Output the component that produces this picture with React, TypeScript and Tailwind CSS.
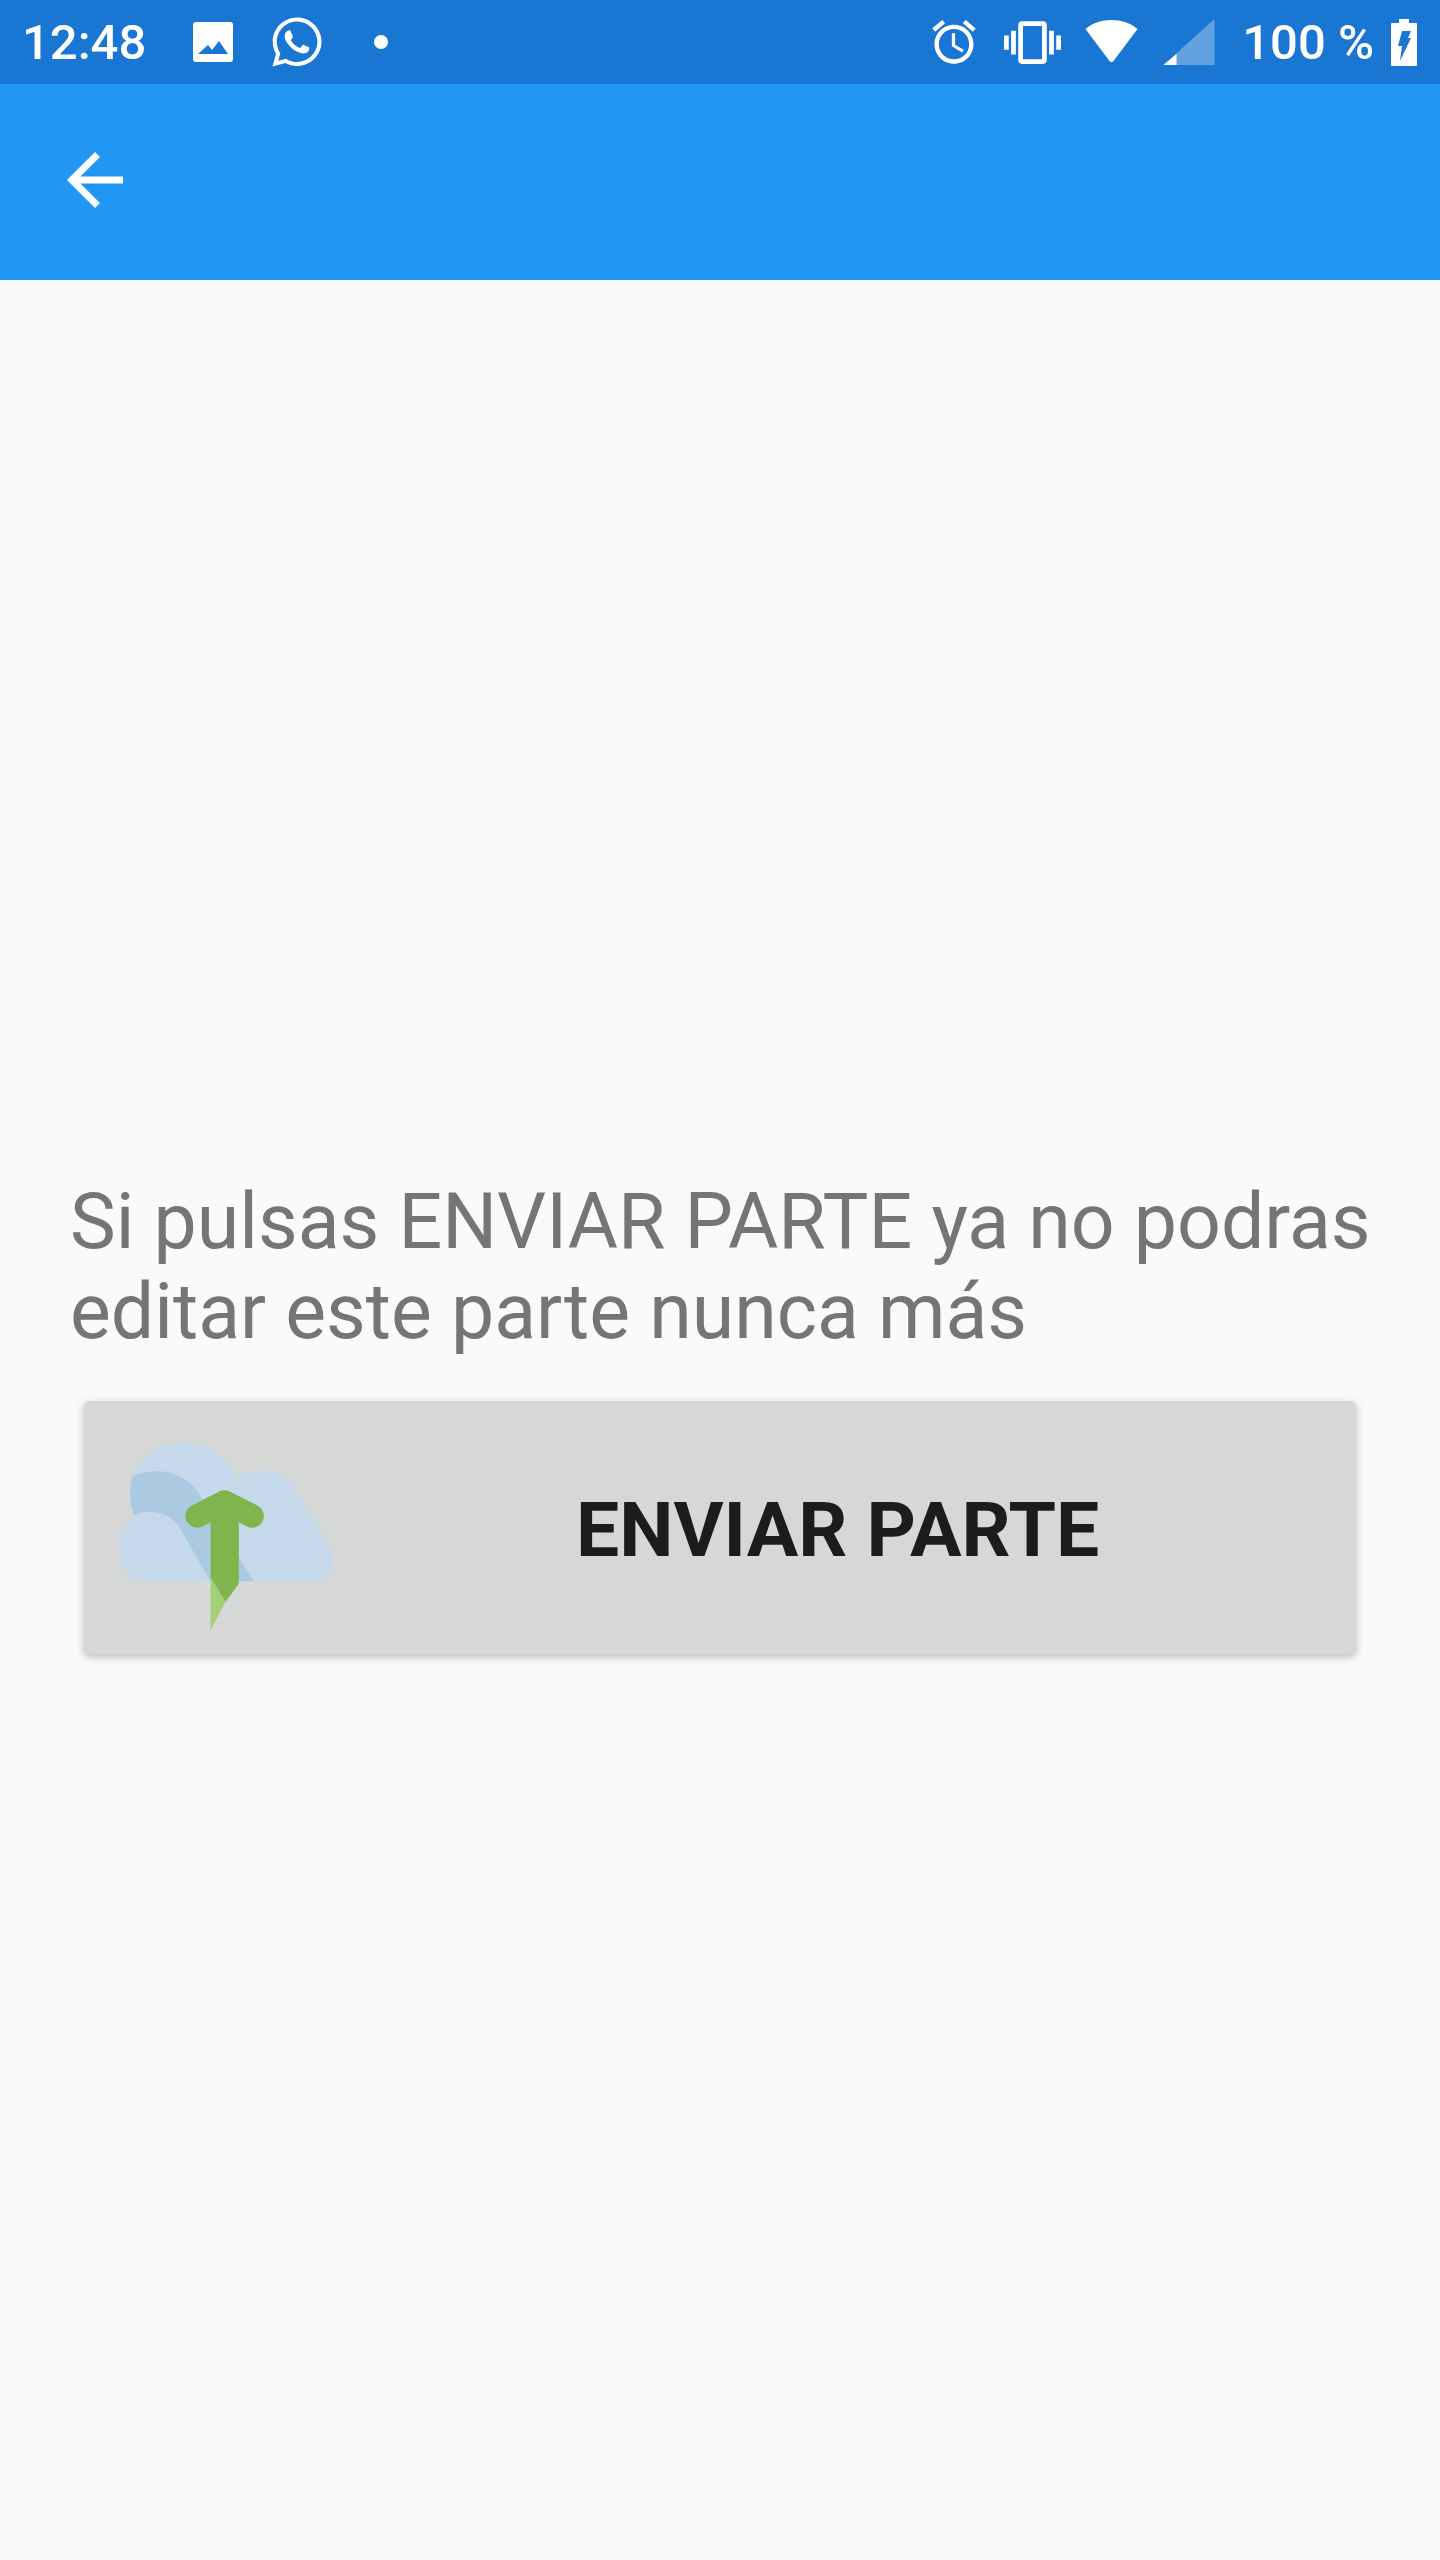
import { FaWhatsapp } from 'react-icons/fa';

const roboto = "font-['Roboto',sans-serif]";

function StatusBar() {
  return (
    <div className={`flex h-[84px] items-center bg-[#1976d2] text-white ${roboto}`}>
      <span className="ml-[22px] w-[122px] text-[49px] leading-none font-medium">12:48</span>
      {/* picture notification */}
      <svg className="ml-[48px] h-[42px] w-[42px]" viewBox="0 0 42 42" fill="none">
        <path
          fillRule="evenodd"
          fill="#fff"
          d="M4 1h34a3 3 0 0 1 3 3v34a3 3 0 0 1-3 3H4a3 3 0 0 1-3-3V4a3 3 0 0 1 3-3zM6 33h30l-9-13-7 9-4-5z"
        />
      </svg>
      <FaWhatsapp className="ml-[35px] h-[56px] w-[56px]" />
      <span className="ml-[49px] h-[14px] w-[14px] rounded-full bg-white" />
      <div className="flex-1" />
      {/* alarm */}
      <svg className="h-[52px] w-[52px]" viewBox="0 0 24 24" fill="#fff">
        <path d="M22 5.72l-4.6-3.86-1.29 1.53 4.6 3.86L22 5.72zM7.88 3.39L6.6 1.86 2 5.71l1.29 1.53 4.59-3.85zM12.5 8H11v6l4.75 2.85.75-1.23-4-2.37V8zM12 4c-4.97 0-9 4.03-9 9s4.02 9 9 9c4.97 0 9-4.03 9-9s-4.03-9-9-9zm0 16c-3.87 0-7-3.13-7-7s3.13-7 7-7 7 3.13 7 7-3.13 7-7 7z" />
      </svg>
      {/* vibrate */}
      <svg className="ml-[24px] h-[57px] w-[57px]" viewBox="0 0 24 24" fill="#fff">
        <path d="M0 15h2V9H0v6zm3 2h2V7H3v10zm19-8v6h2V9h-2zm-3 8h2V7h-2v10zM16.5 3h-9C6.67 3 6 3.67 6 4.5v15c0 .83.67 1.5 1.5 1.5h9c.83 0 1.5-.67 1.5-1.5v-15c0-.83-.67-1.5-1.5-1.5zM16 19H8V5h8v14z" />
      </svg>
      {/* wifi */}
      <svg className="ml-[24px] h-[44px] w-[53px]" viewBox="0 0 52 44" fill="#fff">
        <path d="M0 9C7 3 16 0 26 0s19 3 26 9L28 41c-1 1.500-3 1.500-4 0z" />
      </svg>
      {/* signal */}
      <svg className="ml-[25px] h-[46px] w-[52px]" viewBox="0 0 51 46">
        <path d="M0 46L51 0v46z" fill="#fff" fillOpacity="0.32" />
        <path d="M0 46l13-11v11z" fill="#fff" />
      </svg>
      <span className="ml-[27px] text-[49px] leading-none font-medium">100 %</span>
      {/* battery charging */}
      <svg className="mr-[23px] ml-[17px] h-[47px] w-[26px]" viewBox="0 0 26 47" fill="#fff">
        <path
          fillRule="evenodd"
          d="M8 0h10v4h7a1 1 0 0 1 1 1v41a1 1 0 0 1-1 1H1a1 1 0 0 1-1-1V5a1 1 0 0 1 1-1h7zM11 12h9l-3 7h3L9 42l2-15H7z"
        />
      </svg>
    </div>
  );
}

function Toolbar() {
  return (
    <div className="flex h-[196px] items-center bg-[#2196f3] pb-1 pl-[53px]">
      <svg className="h-[84px] w-[84px]" viewBox="0 0 24 24" fill="#fff">
        <path d="M20 11H7.830l5.590-5.590L12 4l-8 8 8 8 1.410-1.410L7.830 13H20v-2z" />
      </svg>
    </div>
  );
}

function CloudUpload() {
  return (
    <svg className="mt-[18px] h-[190px] w-[217px] shrink-0" viewBox="140 160 650 570">
      <path
        fill="#c5d9ea"
        d="M210 578C170 578 145 520 145 470C145 430 165 395 192 380C180 350 175 310 185 265C210 190 280 160 345 162C420 165 480 205 500 270C530 245 570 240 600 248C640 255 660 275 675 305L760 440C780 470 787 490 787 515C787 550 770 578 735 578z"
      />
      <path
        fill="#acc9e2"
        d="M185 265C210 250 240 247 270 248C320 252 360 275 385 315L550 578H420L340 440C320 395 290 372 245 370C225 370 205 373 190 380C178 345 175 305 185 265z"
      />
      <path fill="#a3cf7a" d="M420 565L465 640L420 725z" />
      <path fill="#7fb54c" d="M420 375H505V585L465 640L420 565z" />
      <path
        fill="none"
        stroke="#7fb54c"
        strokeWidth="70"
        strokeLinecap="round"
        strokeLinejoin="round"
        d="M380 382L462 340L545 382"
      />
    </svg>
  );
}

export default function App() {
  return (
    <div className={`flex min-h-[2560px] flex-col bg-[#fafafa] ${roboto}`}>
      <StatusBar />
      <Toolbar />
      <main className="flex flex-col pt-[897px]">
        <p className="pl-[70px] text-[77px] leading-[90px] text-[#757575]">
          Si pulsas ENVIAR PARTE ya no podras editar este parte nunca más
        </p>
        <button className="mx-[84px] mt-[44px] flex h-[253px] items-center rounded-[5px] bg-[#d6d7d7] pl-[33px] shadow-[0_3px_8px_rgba(0,0,0,0.25)]">
          <CloudUpload />
          <span className="mt-[6px] ml-[242px] text-[76.800px] leading-none font-bold whitespace-nowrap text-[#1c1c1c]">
            ENVIAR PARTE
          </span>
        </button>
      </main>
    </div>
  );
}
